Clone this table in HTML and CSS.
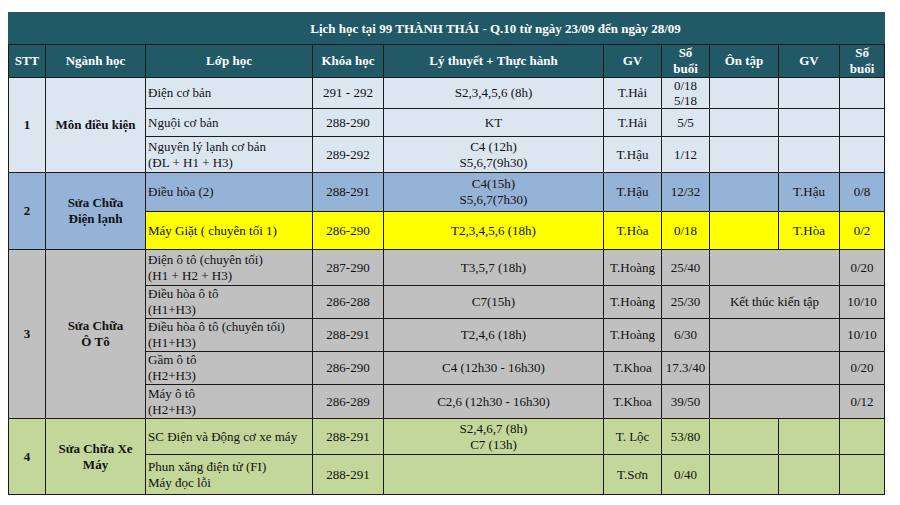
FILE: index.html
```html
<!DOCTYPE html>
<html lang="vi">
<head>
<meta charset="utf-8">
<title>Lịch học</title>
<link rel="stylesheet" href="styles.css">
</head>
<body>
<table class="sched">
  <colgroup>
    <col class="c-stt"><col class="c-nganh"><col class="c-lop"><col class="c-khoa"><col class="c-lt">
    <col class="c-gv"><col class="c-sb"><col class="c-on"><col class="c-gv2"><col class="c-sb2">
  </colgroup>
  <thead>
    <tr class="h-title"><th colspan="10" class="title">Lịch học tại 99 THÀNH THÁI - Q.10 từ ngày 23/09 đến ngày 28/09</th></tr>
    <tr class="h-head">
      <th>STT</th><th>Ngành học</th><th>Lớp học</th><th>Khóa học</th><th>Lý thuyết + Thực hành</th>
      <th>GV</th><th>Số<br>buổi</th><th>Ôn tập</th><th>GV</th><th>Số<br>buổi</th>
    </tr>
  </thead>
  <tbody>
    <tr class="g1 r31">
      <td rowspan="3" class="b">1</td><td rowspan="3" class="b">Môn điều kiện</td>
      <td class="l">Điện cơ bản</td><td>291 - 292</td><td>S2,3,4,5,6 (8h)</td><td>T.Hải</td><td class="tight">0/18<br>5/18</td><td></td><td></td><td></td>
    </tr>
    <tr class="g1 r28">
      <td class="l">Nguội cơ bản</td><td>288-290</td><td>KT</td><td>T.Hải</td><td>5/5</td><td></td><td></td><td></td>
    </tr>
    <tr class="g1 r36">
      <td class="l">Nguyên lý lạnh cơ bản<br>(ĐL + H1 + H3)</td><td>289-292</td><td>C4 (12h)<br>S5,6,7(9h30)</td><td>T.Hậu</td><td>1/12</td><td></td><td></td><td></td>
    </tr>
    <tr class="g2 r39">
      <td rowspan="2" class="b">2</td><td rowspan="2" class="b">Sửa Chữa<br>Điện lạnh</td>
      <td class="l">Điều hòa (2)</td><td>288-291</td><td>C4(15h)<br>S5,6,7(7h30)</td><td>T.Hậu</td><td>12/32</td><td></td><td>T.Hậu</td><td>0/8</td>
    </tr>
    <tr class="yel r38">
      <td class="l">Máy Giặt ( chuyên tối 1)</td><td>286-290</td><td>T2,3,4,5,6 (18h)</td><td>T.Hòa</td><td>0/18</td><td></td><td>T.Hòa</td><td>0/2</td>
    </tr>
    <tr class="g3 r36">
      <td rowspan="5" class="b">3</td><td rowspan="5" class="b">Sửa Chữa<br>Ô Tô</td>
      <td class="l">Điện ô tô (chuyên tối)<br>(H1 + H2 + H3)</td><td>287-290</td><td>T3,5,7 (18h)</td><td>T.Hoàng</td><td>25/40</td><td colspan="2"></td><td>0/20</td>
    </tr>
    <tr class="g3 r33">
      <td class="l">Điều hòa ô tô<br>(H1+H3)</td><td>286-288</td><td>C7(15h)</td><td>T.Hoàng</td><td>25/30</td><td colspan="2">Kết thúc kiến tập</td><td>10/10</td>
    </tr>
    <tr class="g3 r33">
      <td class="l">Điều hòa ô tô (chuyên tối)<br>(H1+H3)</td><td>288-291</td><td>T2,4,6 (18h)</td><td>T.Hoàng</td><td>6/30</td><td colspan="2"></td><td>10/10</td>
    </tr>
    <tr class="g3 r33">
      <td class="l">Gầm ô tô<br>(H2+H3)</td><td>286-290</td><td>C4 (12h30 - 16h30)</td><td>T.Khoa</td><td>17.3/40</td><td colspan="2"></td><td>0/20</td>
    </tr>
    <tr class="g3 r34">
      <td class="l">Máy ô tô<br>(H2+H3)</td><td>286-289</td><td>C2,6 (12h30 - 16h30)</td><td>T.Khoa</td><td>39/50</td><td colspan="2"></td><td>0/12</td>
    </tr>
    <tr class="g4 r36">
      <td rowspan="2" class="b">4</td><td rowspan="2" class="b">Sửa Chữa Xe<br>Máy</td>
      <td class="l">SC Điện và Động cơ xe máy</td><td>288-291</td><td>S2,4,6,7 (8h)<br>C7 (13h)</td><td>T. Lộc</td><td>53/80</td><td></td><td></td><td></td>
    </tr>
    <tr class="g4 r40">
      <td class="l">Phun xăng điện tử (FI)<br>Máy đọc lỗi</td><td>288-291</td><td></td><td>T.Sơn</td><td>0/40</td><td></td><td></td><td></td>
    </tr>
  </tbody>
</table>
</body>
</html>
```

FILE: styles.css
```css
html, body {
  margin: 0;
  padding: 0;
  background: #ffffff;
}
body {
  padding: 12px 0 0 8px;
  font-family: "Liberation Serif", "Times New Roman", serif;
  font-size: 13px;
  color: #111;
}
.sched {
  border-collapse: collapse;
  table-layout: fixed;
  width: 876px;
}
.c-stt { width: 37px; }
.c-nganh { width: 100px; }
.c-lop { width: 167px; }
.c-khoa { width: 71px; }
.c-lt { width: 220px; }
.c-gv { width: 58px; }
.c-sb { width: 48px; }
.c-on { width: 69px; }
.c-gv2 { width: 61px; }
.c-sb2 { width: 45px; }

.sched th, .sched td {
  border: 1px solid #1a1a1a;
  padding: 0;
  text-align: center;
  vertical-align: middle;
  line-height: 16px;
  white-space: nowrap;
  overflow: hidden;
}
.sched th {
  background: #215967;
  color: #ffffff;
  font-weight: bold;
}
.sched th.title {
  padding-left: 98px;
  border-color: #215967 #215967 #1a1a1a #215967;
}
.h-title { height: 32px; }
.h-head { height: 32px; }
.r28 { height: 28px; }
.r31 { height: 31px; }
.r33 { height: 33px; }
.r34 { height: 34px; }
.r36 { height: 36px; }
.r38 { height: 38px; }
.r39 { height: 39px; }
.r40 { height: 40px; }

.sched td.l { text-align: left; padding-left: 2px; }
.sched td.b { font-weight: bold; }
.sched td.tight { line-height: 15px; }

.g1 td { background: #dce6f1; }
.g2 td { background: #95b3d7; }
.yel td { background: #ffff00; }
.g3 td { background: #c0c0c0; }
.g4 td { background: #c4d79b; }
```
